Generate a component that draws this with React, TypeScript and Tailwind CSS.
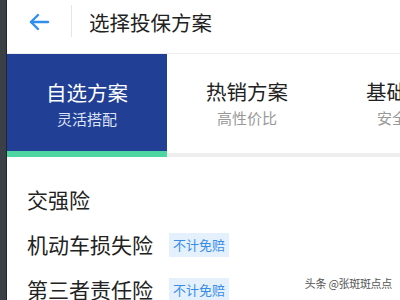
import React from "react";

const font = { fontFamily: '"Noto Sans CJK SC", "Noto Sans", sans-serif' };

const tabs = [
  { title: "自选方案", sub: "灵活搭配", active: true },
  { title: "热销方案", sub: "高性价比", active: false },
  { title: "基础方案", sub: "安全保障", active: false },
];

const items = [
  { name: "交强险", badge: false },
  { name: "机动车损失险", badge: true },
  { name: "第三者责任险", badge: true },
];

export default function App() {
  return (
    <div className="w-[400px] h-[300px] overflow-hidden flex bg-white" style={font}>
      <div className="w-[7px] shrink-0 bg-[#3b4046] border-r border-[#23272b]" />
      <div className="flex-1 flex flex-col min-w-0 relative">
        <div className="h-[53px] shrink-0 flex items-start">
          <div className="w-[64px] h-[44px] flex items-center justify-center">
            <svg width="22" height="18" viewBox="0 0 22 18" fill="none" stroke="#2f8ff0" strokeWidth="2.4" strokeLinecap="round" strokeLinejoin="round">
              <path d="M20 9H3" />
              <path d="M10 2L3 9l7 7" />
            </svg>
          </div>
          <div className="w-px h-[32px] mt-[5px] bg-[#e6e6e6]" />
          <div className="h-[44px] flex items-center pl-[17px] text-[20.5px] text-[#222]">选择投保方案</div>
        </div>
        <div className="flex h-[104px] shrink-0 border-t border-[#ececec]">
          {tabs.map((t) => (
            <div
              key={t.title}
              className={
                t.active
                  ? "w-[160px] shrink-0 flex flex-col items-center justify-center bg-[#213f95] border-b-[6px] border-[#4ed6a2] pt-[3px]"
                  : "w-[160px] shrink-0 flex flex-col items-center justify-center bg-white border-b-[4px] border-[#eeeeee] pb-[2px]"
              }
            >
              <div className={t.active ? "text-[20.5px] leading-[26px] text-white" : "text-[20.5px] leading-[26px] text-[#222]"}>{t.title}</div>
              <div className={t.active ? "text-[15px] leading-[20px] mt-[4px] text-[#dde4f5]" : "text-[15px] leading-[20px] mt-[4px] text-[#999]"}>{t.sub}</div>
            </div>
          ))}
        </div>
        <div className="flex flex-col pl-[20px] pt-[30px] gap-[19px]">
          {items.map((it) => (
            <div key={it.name} className="flex items-center h-[26px]">
              <span className="text-[21px] text-[#222]">{it.name}</span>
              {it.badge && (
                <span className="ml-[16px] px-[4px] h-[24px] flex items-center bg-[#e4f1fd] text-[#3a8de6] text-[13px]">不计免赔</span>
              )}
            </div>
          ))}
        </div>
        <div className="absolute right-[8px] bottom-[9px] text-[11px] tracking-[-0.3px] text-[#555] [text-shadow:0_0_2px_#fff]">头条 @张斑斑点点</div>
      </div>
    </div>
  );
}
